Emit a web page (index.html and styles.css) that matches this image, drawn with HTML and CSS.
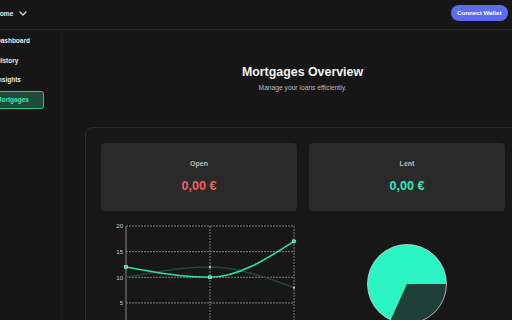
FILE: index.html
```html
<!DOCTYPE html>
<html>
<head>
<meta charset="utf-8">
<link rel="stylesheet" href="styles.css">
</head>
<body>
<div class="app">
  <header class="topbar">
    <div class="home">Home
      <svg class="chev" width="8" height="5" viewBox="0 0 8 5"><path d="M1 1 L4 4 L7 1" fill="none" stroke="#ddd" stroke-width="1.2" stroke-linecap="round" stroke-linejoin="round"/></svg>
    </div>
    <button class="wallet">Connect Wallet</button>
  </header>
  <div class="body">
    <nav class="sidebar">
      <a class="nav-item">Dashboard</a>
      <a class="nav-item">History</a>
      <a class="nav-item">Insights</a>
      <a class="nav-item active">Mortgages</a>
    </nav>
    <main class="main">
      <h1 class="title">Mortgages Overview</h1>
      <p class="subtitle">Manage your loans efficiently.</p>
      <section class="panel">
        <div class="stats">
          <div class="stat">
            <div class="stat-label">Open</div>
            <div class="stat-value red">0,00 €</div>
          </div>
          <div class="stat">
            <div class="stat-label">Lent</div>
            <div class="stat-value green">0,00 €</div>
          </div>
        </div>
        <div class="charts">
          <svg class="chart" width="196" height="110" viewBox="0 0 196 110">
            <g stroke="#9a9a9a" stroke-width="0.8" stroke-dasharray="2 1" fill="none">
              <line x1="25" y1="5" x2="193" y2="5"/>
              <line x1="25" y1="30.65" x2="193" y2="30.65"/>
              <line x1="25" y1="56.3" x2="193" y2="56.3"/>
              <line x1="25" y1="81.95" x2="193" y2="81.95"/>
              <line x1="109" y1="5" x2="109" y2="110"/>
              <line x1="193" y1="5" x2="193" y2="110"/>
            </g>
            <line x1="25" y1="5" x2="25" y2="110" stroke="#8a8a8a" stroke-width="1"/>
            <g class="ylab" fill="#cfcfcf" font-size="6" text-anchor="end">
              <text x="22" y="7.2">20</text>
              <text x="22" y="32.8">15</text>
              <text x="22" y="58.5">10</text>
              <text x="22" y="84.1">5</text>
            </g>
            <path d="M25 56.3 C53 51.13 81 45.96 109 45.96 C137 45.96 165 56.31 193 66.65" fill="none" stroke="#1f4a3a" stroke-width="1.6"/>
            <path d="M25 45.96 C53 51.15 81 56.3 109 56.3 C137 56.3 165 38.34 193 20.39" fill="none" stroke="#2ee0aa" stroke-width="1.6"/>
            <g fill="#bdbdbd">
              <rect x="108" y="45" width="2" height="2"/>
              <rect x="192" y="65.6" width="2" height="2"/>
            </g>
            <g fill="#2ee0aa" stroke="#b9ffe8" stroke-width="0.5">
              <rect x="23.5" y="44.5" width="3" height="3"/>
              <rect x="107.5" y="54.8" width="3" height="3"/>
              <rect x="191.5" y="18.9" width="3" height="3"/>
            </g>
          </svg>
          <svg class="chart" width="196" height="110" viewBox="0 0 196 110">
            <path d="M98 63 L137.5 63 A39.5 39.5 0 0 1 81.6 98.9 Z" fill="#1f4038"/>
            <path d="M98 63 L81.6 98.9 A39.5 39.5 0 1 1 137.5 63 Z" fill="#2cf5c4"/>
            <circle cx="98" cy="63" r="39.5" fill="none" stroke="#cfcfcf" stroke-width="0.8"/>
          </svg>
        </div>
      </section>
    </main>
  </div>
</div>
</body>
</html>
```

FILE: styles.css
```css
html, body {
  margin: 0;
  padding: 0;
  background: #161616;
  overflow: hidden;
  height: 320px;
}
body {
  font-family: "Liberation Sans", Arial, sans-serif;
  color: #e6e6e6;
}
.app {
  margin-left: -21px;
  width: 563px;
}
.topbar {
  display: flex;
  align-items: flex-start;
  justify-content: space-between;
  padding: 5px 34px 0 16px;
  box-sizing: border-box;
  height: 30px;
  border-bottom: 1px solid #2a2a2a;
}
.home {
  display: flex;
  align-items: center;
  gap: 6px;
  height: 16px;
  font-weight: bold;
  font-size: 6.6px;
  color: #ececec;
}
.chev {
  display: block;
  margin-top: 1px;
}
.wallet {
  height: 16px;
  padding: 0 6.5px;
  border: none;
  border-radius: 8px;
  background: #5b6cf3;
  color: #fff;
  font-family: "Liberation Sans", Arial, sans-serif;
  font-weight: bold;
  font-size: 6.2px;
  line-height: 16px;
}
.body {
  display: flex;
}
.sidebar {
  width: 83px;
  box-sizing: border-box;
  height: 290px;
  padding: 2px 8px 0 8px;
  border-right: 1px solid #1b1b1b;
  display: flex;
  flex-direction: column;
  gap: 1.6px;
}
.nav-item {
  display: block;
  width: 57px;
  box-sizing: border-box;
  height: 18px;
  line-height: 16px;
  padding: 0 8px;
  font-size: 6.5px;
  font-weight: bold;
  color: #e8e8e8;
  border-radius: 3px;
  border: 1px solid transparent;
}
.nav-item.active {
  background: #1e4a3a;
  border-color: #2fbf86;
  color: #3ee8b0;
}
.main {
  width: 480px;
  box-sizing: border-box;
  padding: 35px 22px 0 23px;
  text-align: center;
}
.title {
  margin: 0;
  font-size: 12.4px;
  line-height: 15px;
  font-weight: bold;
  color: #f2f2f2;
}
.subtitle {
  margin: 4px 0 0;
  font-size: 6.7px;
  line-height: 8px;
  color: #bdbdbd;
}
.panel {
  margin-top: 35px;
  width: 435px;
  box-sizing: border-box;
  border: 1px solid #2a2a2a;
  border-radius: 8px;
  padding: 15px;
  height: 230px;
  background: #171717;
}
.stats {
  display: grid;
  grid-template-columns: 196px 196px;
  gap: 12px;
}
.stat {
  height: 68px;
  background: #2a2a2a;
  border-radius: 4px;
  display: flex;
  flex-direction: column;
  align-items: center;
  padding-top: 17px;
  box-sizing: border-box;
}
.stat-label {
  font-size: 7px;
  line-height: 8px;
  font-weight: bold;
  color: #bdbdbd;
}
.stat-value {
  margin-top: 11px;
  font-size: 12.6px;
  line-height: 14px;
  font-weight: bold;
}
.red { color: #f25f5f; }
.green { color: #2ee8b8; }
.charts {
  display: grid;
  grid-template-columns: 196px 196px;
  gap: 12px;
  margin-top: 9.5px;
}
.chart {
  display: block;
  font-family: "Liberation Sans", Arial, sans-serif;
}
```
